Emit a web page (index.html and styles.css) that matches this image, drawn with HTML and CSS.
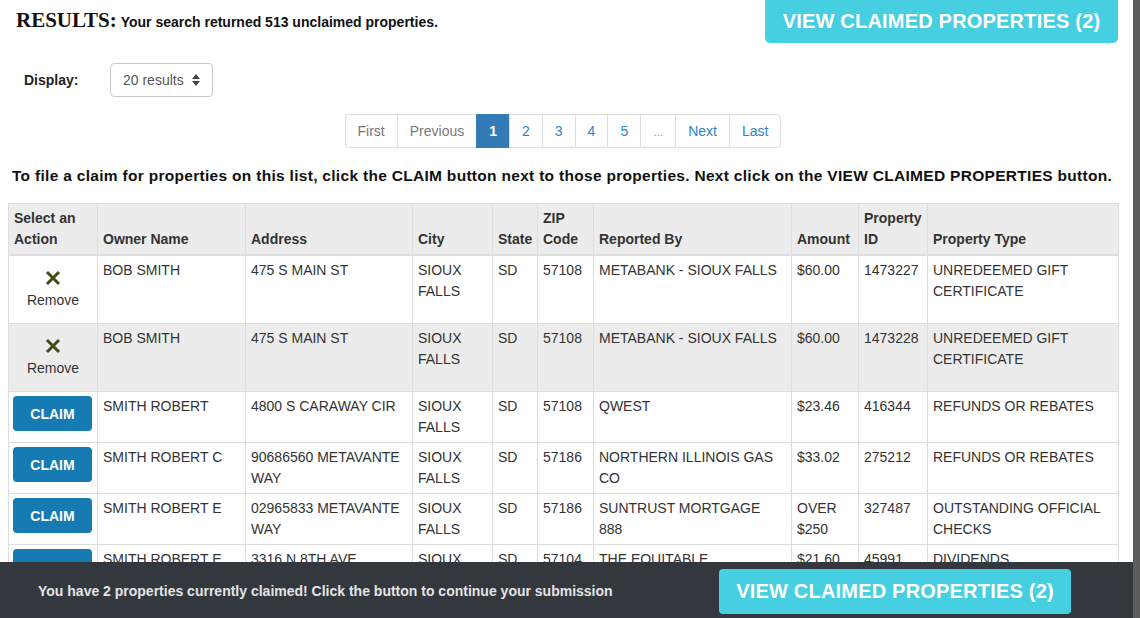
FILE: index.html
```html
<!DOCTYPE html>
<html lang="en">
<head>
  <meta charset="UTF-8" />
  <title>Unclaimed Property Search Results</title>
  <link rel="stylesheet" href="styles.css">
</head>
<body>

<div class="page">
  <!-- Header -->
  <div class="top">
    <div class="results-title">
      <span class="results-label">RESULTS:</span>
      <span class="results-count">Your search returned 513 unclaimed properties.</span>
    </div>
    <button class="btn-view">VIEW CLAIMED PROPERTIES (2)</button>
  </div>

  <div class="display-row">
    <label class="display-label">Display:</label>
    <div class="select-box">
      20 results
      <svg class="arrows" width="8" height="12" viewBox="0 0 8 12"><path d="M4 0 L8 5 L0 5 Z M0 7 L8 7 L4 12 Z" fill="#444"/></svg>
    </div>
  </div>

  <!-- Pagination -->
  <div class="pager-wrap">
    <ul class="pager">
      <li class="disabled">First</li>
      <li class="disabled">Previous</li>
      <li class="active">1</li>
      <li>2</li>
      <li>3</li>
      <li>4</li>
      <li>5</li>
      <li class="ellipsis">...</li>
      <li>Next</li>
      <li>Last</li>
    </ul>
  </div>

  <p class="instructions">To file a claim for properties on this list, click the CLAIM button next to those properties. Next click on the VIEW CLAIMED PROPERTIES button.</p>

  <table class="results">
    <colgroup>
      <col style="width:89px"><col style="width:148px"><col style="width:167px"><col style="width:80px"><col style="width:45px">
      <col style="width:56px"><col style="width:198px"><col style="width:67px"><col style="width:69px"><col style="width:191px">
    </colgroup>
    <thead>
      <tr>
        <th>Select an Action</th>
        <th>Owner Name</th>
        <th>Address</th>
        <th>City</th>
        <th>State</th>
        <th>ZIP Code</th>
        <th>Reported By</th>
        <th>Amount</th>
        <th>Property ID</th>
        <th>Property Type</th>
      </tr>
    </thead>
    <tbody>
      <tr>
        <td class="action">
          <a class="remove">
            <span class="x-icon"><svg width="16" height="16" viewBox="0 0 16 16"><path d="M2 2 L14 14 M14 2 L2 14" stroke="#3f4c15" stroke-width="3" fill="none"/></svg></span>
            Remove
          </a>
        </td>
        <td>BOB SMITH</td>
        <td>475 S MAIN ST</td>
        <td>SIOUX FALLS</td>
        <td>SD</td>
        <td>57108</td>
        <td>METABANK - SIOUX FALLS</td>
        <td>$60.00</td>
        <td>1473227</td>
        <td>UNREDEEMED GIFT CERTIFICATE</td>
      </tr>
      <tr class="shaded">
        <td class="action">
          <a class="remove">
            <span class="x-icon"><svg width="16" height="16" viewBox="0 0 16 16"><path d="M2 2 L14 14 M14 2 L2 14" stroke="#3f4c15" stroke-width="3" fill="none"/></svg></span>
            Remove
          </a>
        </td>
        <td>BOB SMITH</td>
        <td>475 S MAIN ST</td>
        <td>SIOUX FALLS</td>
        <td>SD</td>
        <td>57108</td>
        <td>METABANK - SIOUX FALLS</td>
        <td>$60.00</td>
        <td>1473228</td>
        <td>UNREDEEMED GIFT CERTIFICATE</td>
      </tr>
      <tr>
        <td><button class="btn-claim">CLAIM</button></td>
        <td>SMITH ROBERT</td>
        <td>4800 S CARAWAY CIR</td>
        <td>SIOUX FALLS</td>
        <td>SD</td>
        <td>57108</td>
        <td>QWEST</td>
        <td>$23.46</td>
        <td>416344</td>
        <td>REFUNDS OR REBATES</td>
      </tr>
      <tr>
        <td><button class="btn-claim">CLAIM</button></td>
        <td>SMITH ROBERT C</td>
        <td>90686560 METAVANTE WAY</td>
        <td>SIOUX FALLS</td>
        <td>SD</td>
        <td>57186</td>
        <td>NORTHERN ILLINOIS GAS CO</td>
        <td>$33.02</td>
        <td>275212</td>
        <td>REFUNDS OR REBATES</td>
      </tr>
      <tr>
        <td><button class="btn-claim">CLAIM</button></td>
        <td>SMITH ROBERT E</td>
        <td>02965833 METAVANTE WAY</td>
        <td>SIOUX FALLS</td>
        <td>SD</td>
        <td>57186</td>
        <td>SUNTRUST MORTGAGE 888</td>
        <td>OVER $250</td>
        <td>327487</td>
        <td>OUTSTANDING OFFICIAL CHECKS</td>
      </tr>
      <tr>
        <td><button class="btn-claim">CLAIM</button></td>
        <td>SMITH ROBERT E</td>
        <td>3316 N 8TH AVE</td>
        <td>SIOUX FALLS</td>
        <td>SD</td>
        <td>57104</td>
        <td>THE EQUITABLE</td>
        <td>$21.60</td>
        <td>45991</td>
        <td>DIVIDENDS</td>
      </tr>
    </tbody>
  </table>
</div>
<div class="edge"></div>

<!-- Claimed bar -->
<div class="claimed-bar">
  <span class="claimed-text">You have 2 properties currently claimed! Click the button to continue your submission</span>
  <button class="btn-view btn-bar">VIEW CLAIMED PROPERTIES (2)</button>
</div>

</body>
</html>
```

FILE: styles.css
```css
* { margin: 0; padding: 0; box-sizing: border-box; }
html, body {
  height: 100%;
  overflow: hidden;
}
body {
  display: flex;
  font-family: "Liberation Sans", Arial, sans-serif;
  font-size: 14px;
  line-height: 1.5;
  color: #333;
  background: #fff;
}
.page {
  width: 1133px;
  flex: none;
  padding: 0 15px 0 8px;
}
.edge {
  flex: 1;
  background: #5c5c5c;
}
.top {
  display: flex;
  justify-content: space-between;
  align-items: flex-start;
}
.results-title {
  padding: 5px 0 0 8px;
  color: #111;
}
.results-label {
  font-family: "Liberation Serif", "Times New Roman", serif;
  font-weight: bold;
  font-size: 21px;
}
.results-count {
  font-weight: bold;
  font-size: 14px;
}
.btn-view {
  width: 353px;
  height: 48px;
  margin-top: -5px;
  border: none;
  border-radius: 5px;
  background: #46cfe0;
  color: #fff;
  font-family: "Liberation Sans", Arial, sans-serif;
  font-weight: bold;
  font-size: 20px;
  letter-spacing: 0.2px;
  padding-top: 4px;
  cursor: pointer;
}
.display-row {
  display: flex;
  align-items: center;
  margin-top: 20px;
  padding-left: 16px;
}
.display-label {
  width: 86px;
  font-weight: bold;
  color: #222;
}
.select-box {
  width: 103px;
  height: 34px;
  border: 1px solid #ccc;
  border-radius: 4px;
  padding: 6px 12px;
  color: #555;
}
.arrows {
  margin-left: 4px;
  vertical-align: -1px;
}
.pager-wrap {
  display: flex;
  justify-content: center;
  margin-top: 17px;
}
.pager {
  display: flex;
  list-style: none;
}
.pager li {
  height: 34px;
  padding: 6px 12px;
  border: 1px solid #ddd;
  margin-left: -1px;
  color: #2d84cf;
}
.pager li:first-child {
  border-radius: 4px 0 0 4px;
  margin-left: 0;
}
.pager li:last-child {
  border-radius: 0 4px 4px 0;
}
.pager li.disabled {
  color: #777;
}
.pager li.active {
  background: #337ab7;
  border-color: #337ab7;
  color: #fff;
  font-weight: bold;
}
.pager li.ellipsis {
  color: #999;
  font-size: 12px;
  padding-top: 8px;
}
.instructions {
  margin-top: 16px;
  padding-left: 4px;
  font-weight: bold;
  font-size: 15.5px;
  letter-spacing: 0.3px;
  color: #111;
}
.results {
  width: 1110px;
  margin-top: 16px;
  border-collapse: collapse;
  table-layout: fixed;
}
.results th, .results td {
  border: 1px solid #ddd;
  padding: 4px 5px;
  text-align: left;
  vertical-align: top;
}
.results th {
  background: #ececec;
  vertical-align: bottom;
  border-bottom: 2px solid #ddd;
}
.results tr.shaded td {
  background: #ececec;
}
.results td.action {
  text-align: center;
}
.remove {
  display: block;
  padding-bottom: 8px;
}
.x-icon {
  display: block;
  padding: 10px 0 4px;
  height: 30px;
}
.btn-claim {
  width: 79px;
  height: 35px;
  margin-left: -1px;
  border: none;
  border-radius: 4px;
  background: #177bb3;
  color: #fff;
  font-family: "Liberation Sans", Arial, sans-serif;
  font-weight: bold;
  font-size: 14px;
}
.claimed-bar {
  position: fixed;
  left: 0;
  bottom: 0;
  width: 1133px;
  height: 56px;
  background: #33373e;
  display: flex;
  align-items: center;
  justify-content: space-between;
  padding: 2px 62px 0 38px;
}
.claimed-text {
  font-weight: bold;
  color: #e4e4e4;
}
.btn-bar {
  width: 352px;
  height: 45px;
  padding-top: 0;
  border-radius: 4px;
  margin-top: 0;
}
```
